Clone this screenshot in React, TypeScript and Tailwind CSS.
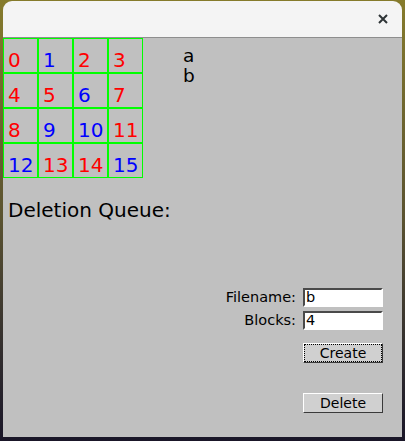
import React from 'react';

const cells = [
  { n: 0, c: 'red' }, { n: 1, c: 'blue' }, { n: 2, c: 'red' }, { n: 3, c: 'red' },
  { n: 4, c: 'red' }, { n: 5, c: 'red' }, { n: 6, c: 'blue' }, { n: 7, c: 'red' },
  { n: 8, c: 'red' }, { n: 9, c: 'blue' }, { n: 10, c: 'blue' }, { n: 11, c: 'red' },
  { n: 12, c: 'blue' }, { n: 13, c: 'red' }, { n: 14, c: 'red' }, { n: 15, c: 'blue' },
];

const files = ['a', 'b'];

function Entry({ value }: { value: string }) {
  return (
    <div className="h-[19px] w-[80px] border-2 border-t-[#4a4a4a] border-l-[#4a4a4a] border-b-white border-r-white bg-white pl-[1px] text-[14.5px] leading-[15px] text-black">
      {value}
    </div>
  );
}

function TkButton({ label, focused }: { label: string; focused?: boolean }) {
  return (
    <div className="h-[20px] w-[80px] border-[1.5px] border-t-white border-l-white border-b-[#3a3a3a] border-r-[#3a3a3a] bg-[#d0d0d0] p-[1px]">
      <div
        className={
          'flex h-full w-full items-center justify-center text-[14px] leading-none text-black ' +
          (focused ? 'outline-1 outline-dotted outline-black' : '')
        }
      >
        {label}
      </div>
    </div>
  );
}

export default function App() {
  return (
    <div className="h-[441px] w-[405px] overflow-hidden bg-gradient-to-b from-[#867b2b] via-[#5a5230] to-[#1a1628] px-[3px] pt-[1px] font-['DejaVu_Sans',sans-serif]">
      <div className="flex h-[436px] flex-col">
        <div className="flex h-[36px] items-center justify-end rounded-t-[9px] bg-[#f4f4f4] pr-[14px]">
          <svg width="10" height="10" viewBox="0 0 10 10">
            <path d="M1 1L9 9M9 1L1 9" stroke="#2e3436" strokeWidth="2" />
          </svg>
        </div>
        <div className="h-[1px] bg-[#8e8e8e]" />
        <div className="flex flex-1 flex-col bg-[#c0c0c0]">
          <div className="flex">
            <div className="grid w-[140px] grid-cols-4">
              {cells.map((cell) => (
                <div
                  key={cell.n}
                  className={
                    'h-[35px] border border-[#00ff00] pl-[4px] pt-[10px] text-[20px] leading-[23px] ' +
                    (cell.c === 'red' ? 'text-[#ff0000]' : 'text-[#0000ff]')
                  }
                >
                  {cell.n}
                </div>
              ))}
            </div>
            <div className="ml-[40px] pt-[8px] text-[18.5px] leading-[20px] text-black">
              {files.map((f) => (
                <div key={f}>{f}</div>
              ))}
            </div>
          </div>
          <div className="mt-[21px] pl-[5px] text-[20px] leading-[23px] text-black">Deletion Queue:</div>
          <div className="mt-[65px] flex flex-col items-end pr-[19px]">
            <div className="grid grid-cols-[auto_80px] items-center gap-x-[7px] gap-y-[1px] text-[14.5px] text-black">
              <span className="text-right">Filename:</span>
              <Entry value="b" />
              <span className="text-right">Blocks:</span>
              <Entry value="4" />
            </div>
            <div className="mt-[11px]">
              <TkButton label="Create" focused />
            </div>
            <div className="mt-[30px]">
              <TkButton label="Delete" />
            </div>
          </div>
        </div>
      </div>
    </div>
  );
}
